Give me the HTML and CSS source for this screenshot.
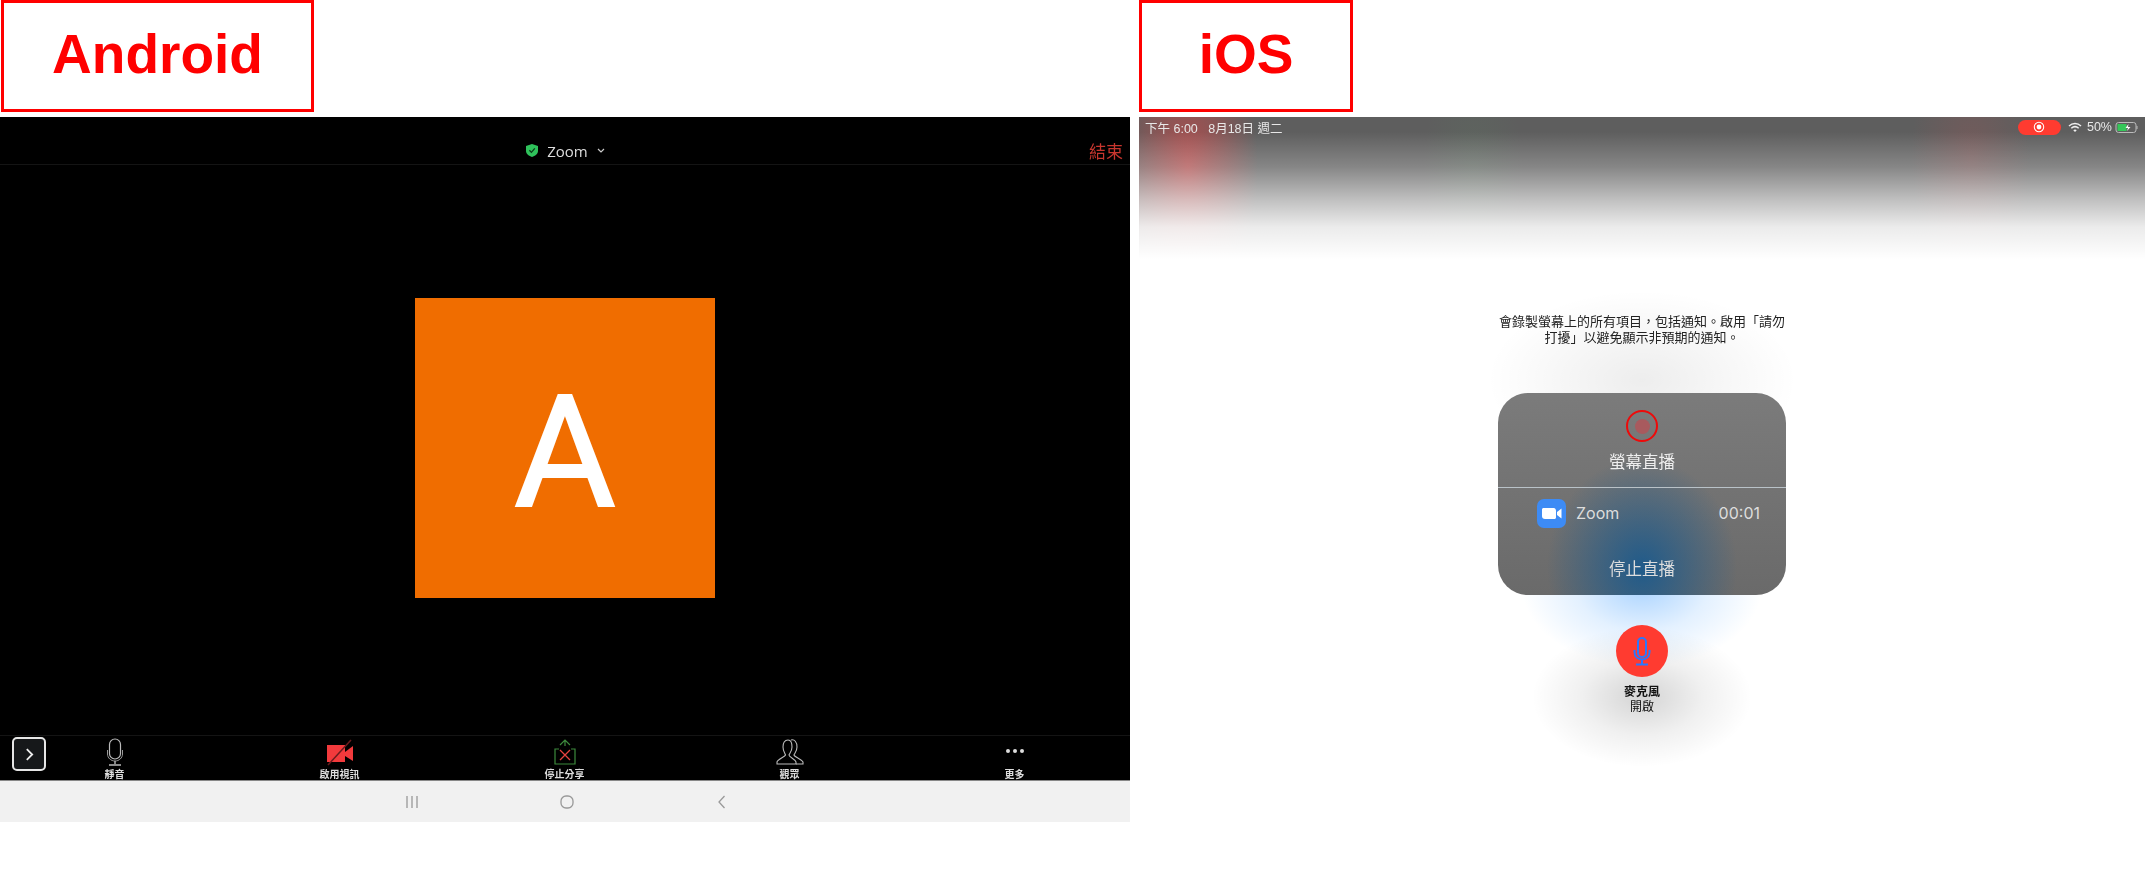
FILE: index.html
```html
<!DOCTYPE html>
<html lang="zh-Hant">
<head>
<meta charset="utf-8">
<title>Android / iOS</title>
<link rel="stylesheet" href="styles.css">
</head>
<body>
<div class="page">
  <section class="col col-android">
    <h2 class="tag tag-android">Android</h2>
    <div class="android">
      <header class="a-head">
        <span></span>
        <div class="a-title">
          <svg class="shield" viewBox="0 0 12 13"><path d="M6 0 12 2V7C12 10 9 12 6 13 3 12 0 10 0 7V2Z" fill="#2fc25b"/><path d="M3.4 6.3 5.4 8.4 8.8 4.4" fill="none" stroke="#0a3a1a" stroke-width="1.3"/></svg>
          <span>Zoom</span>
          <svg class="chev" viewBox="0 0 8 5"><path d="M1 1 4 4 7 1" fill="none" stroke="#ccc" stroke-width="1.2"/></svg>
        </div>
        <span class="a-end">結束</span>
      </header>
      <div class="a-stage"><div class="avatar">A</div></div>
      <nav class="a-tools">
        <div class="a-toggle"><svg viewBox="0 0 10 14" class="tog-ic"><path d="M2 1 8 7 2 13" fill="none" stroke="#eee" stroke-width="2"/></svg></div>
        <div class="tool">
          <svg class="tool-ic" viewBox="0 0 30 29"><rect x="9.5" y="1" width="11" height="20" rx="5.5" fill="none" stroke="#bbb" stroke-width="1.2"/><path d="M7.500 12V16C7.500 20 11 23 15 23S22.500 20 22.500 16V12" fill="none" stroke="#999" stroke-width="1"/><path d="M15 23V26M9 27H21" stroke="#bbb" stroke-width="1.400" fill="none"/></svg>
          <span>靜音</span>
        </div>
        <div class="tool">
          <svg class="tool-ic" viewBox="0 0 30 29"><path d="M2 7H20V24H2Z" fill="#f23a3c"/><path d="M20 14 28 8V23L20 18Z" fill="#f23a3c"/><path d="M3 27 26 2" stroke="#6b1c1e" stroke-width="1.500"/></svg>
          <span>啟用視訊</span>
        </div>
        <div class="tool">
          <svg class="tool-ic" viewBox="0 0 30 29"><path d="M9 11H5V26H25V11H21M10 7 15 2 20 7M15 2V8" fill="none" stroke="#3d8a3d" stroke-width="1.200"/><path d="M10 12 20 22M20 12 10 22" stroke="#e8423f" stroke-width="1.300"/></svg>
          <span>停止分享</span>
        </div>
        <div class="tool">
          <svg class="tool-ic" viewBox="0 0 30 29"><path d="M13 2C9.500 2 8 5 8 9 8 13 10 15 10.500 17 10 19 3 21 2 24V26H21V24C20 21 14 19 14 17 15 15 17 13 17 9 17 5 16 2 13 2Z" fill="none" stroke="#bbb" stroke-width="1.100"/><path d="M16 2C19.500 1 22 4 22 9 22 13 20 15 19 17 19.500 19 26 21 28 24V26H21" fill="none" stroke="#bbb" stroke-width="1.100"/></svg>
          <span>觀眾</span>
        </div>
        <div class="tool">
          <svg class="tool-ic" viewBox="0 0 30 29"><circle cx="8" cy="13" r="2" fill="#ddd"/><circle cx="15" cy="13" r="2" fill="#ddd"/><circle cx="22" cy="13" r="2" fill="#ddd"/></svg>
          <span>更多</span>
        </div>
      </nav>
      <div class="a-nav">
        <svg class="nav-ic" viewBox="0 0 16 16"><path d="M3 2V14M8 2V14M13 2V14" stroke="#999" stroke-width="1.300"/></svg>
        <svg class="nav-ic" viewBox="0 0 16 16"><rect x="2" y="2" width="12" height="12" rx="5" fill="none" stroke="#999" stroke-width="1.300"/></svg>
        <svg class="nav-ic" viewBox="0 0 16 16"><path d="M10.500 2 5 8 10.500 14" fill="none" stroke="#999" stroke-width="1.300"/></svg>
      </div>
    </div>
  </section>

  <section class="col col-ios">
    <h2 class="tag tag-ios">iOS</h2>
    <div class="ios">
      <div class="i-status">
        <span class="i-time">下午 6:00&nbsp;&nbsp;&nbsp;8月18日 週二</span>
        <div class="i-right">
          <span class="i-pill"><svg viewBox="0 0 14 14" class="pill-ic"><circle cx="7" cy="7" r="5.500" fill="none" stroke="#fff" stroke-width="1.200"/><circle cx="7" cy="7" r="2.800" fill="#fff"/></svg></span>
          <svg class="i-wifi" viewBox="0 0 14 11"><path d="M1 4C4.500 .8 9.500 .8 13 4M3.300 6.300C5.500 4.300 8.500 4.300 10.700 6.300" fill="none" stroke="#eee" stroke-width="1.500"/><path d="M5.300 8.200 7 10 8.700 8.200C7.700 7.300 6.300 7.300 5.300 8.200Z" fill="#eee"/></svg>
          <span class="i-pct">50%</span>
          <svg class="i-batt" viewBox="0 0 23 11"><rect x=".5" y=".5" width="20" height="10" rx="2.500" fill="none" stroke="#bbb"/><rect x="2" y="2" width="9" height="7" fill="#35c759"/><path d="M21.500 4V7" stroke="#bbb"/><path d="M13 2 10 6H12.500L11.500 9 15 5H12.500Z" fill="#fff"/></svg>
        </div>
      </div>
      <main class="i-main">
        <p class="i-note">會錄製螢幕上的所有項目，包括通知。啟用「請勿打擾」以避免顯示非預期的通知。</p>
        <div class="i-card">
          <div class="i-card-top">
            <span class="i-rec"><span class="i-dot"></span></span>
            <span class="i-card-title">螢幕直播</span>
          </div>
          <div class="i-row">
            <svg class="z-ic" viewBox="0 0 29 29"><rect width="29" height="29" rx="7" fill="#3d8bf5"/><path d="M5 10.500C5 9.700 5.700 9 6.500 9H16C18 9 19 10 19 12V18.500C19 19.300 18.300 20 17.500 20H8C6 20 5 19 5 17Z" fill="#fff"/><path d="M20 13 24.500 9.500V19.500L20 16Z" fill="#fff"/></svg>
            <span class="z-name">Zoom</span>
            <span class="z-time">00:01</span>
          </div>
          <div class="i-stop">停止直播</div>
        </div>
        <div class="i-mic">
          <svg viewBox="0 0 52 52" class="mic-ic"><circle cx="26" cy="26" r="26" fill="#ff3b30"/><rect x="22" y="13" width="8" height="19" rx="4" fill="#ff3b30" stroke="#2a78ff" stroke-width="2"/><path d="M18.500 25V27C18.500 32 22 34.500 26 34.500S33.500 32 33.500 27V25M26 35V39M20 39.500H32" fill="none" stroke="#2a78ff" stroke-width="2"/></svg>
        </div>
        <div class="i-mic-label"><strong>麥克風</strong><span>開啟</span></div>
      </main>
    </div>
  </section>
</div>
</body>
</html>
```

FILE: styles.css
```css
* { box-sizing: border-box; }
html, body { margin: 0; padding: 0; background: #fff; }
body {
  width: 2145px;
  height: 872px;
  overflow: hidden;
  font-family: "Liberation Sans", "Noto Sans CJK TC", sans-serif;
}
.page { display: flex; align-items: stretch; height: 872px; }
.col { display: flex; flex-direction: column; }
.col-android { width: 1130px; margin-right: 9px; }
.col-ios { flex: 1; }

.tag {
  margin: 0 0 5px;
  height: 112px;
  flex: none;
  border: 3px solid #ff0000;
  color: #ff0000;
  font-size: 55px;
  font-weight: 700;
  display: flex;
  align-items: center;
  justify-content: center;
  padding-bottom: 4px;
}
.tag-android { width: 313px; margin-left: 1px; }
.tag-ios { width: 214px; }

/* Android */
.android { height: 705px; flex: none; display: flex; flex-direction: column; background: #000; }
.a-head {
  height: 48px;
  flex: none;
  border-bottom: 1px solid #141414;
  display: grid;
  grid-template-columns: 1fr auto 1fr;
  align-items: center;
  padding: 20px 7px 0 0;
  filter: blur(.4px);
}
.a-title { display: flex; align-items: center; margin-left: 8px; color: #ddd; font-family: "Open Sans", sans-serif; font-size: 15px; }
.shield { width: 12px; height: 13px; margin-right: 9px; }
.chev { width: 8px; height: 5px; margin-left: 9px; }
.a-end { justify-self: end; color: #c8362e; font-size: 17px; font-family: "Noto Sans CJK TC", sans-serif; line-height: 20px; }
.a-stage { height: 570px; flex: none; display: flex; align-items: center; justify-content: center; padding-bottom: 4px; }
.avatar {
  width: 300px;
  height: 300px;
  background: #f06d00;
  color: #fff;
  font-family: "Roboto", sans-serif;
  font-size: 156px;
  font-weight: 400;
  -webkit-text-stroke: 2px #fff;
  display: flex;
  align-items: center;
  justify-content: center;
  padding-top: 8px;
}
.a-tools {
  position: relative;
  flex: none;
  height: 46px;
  border-top: 1px solid #141414;
  border-bottom: 1px solid #888;
  padding: 2px 0 0 2px;
  display: grid;
  grid-template-columns: repeat(5, 225px);
}
.a-toggle {
  position: absolute;
  left: 12px;
  top: 1px;
  width: 34px;
  height: 34px;
  border: 2px solid #e6e6e6;
  border-radius: 5px;
  background: #16181a;
  display: flex;
  align-items: center;
  justify-content: center;
}
.tog-ic { width: 9px; height: 13px; }
.tool { display: flex; flex-direction: column; align-items: center; color: #ddd; font-size: 10px; font-weight: 700; line-height: 12px; font-family: "Noto Sans CJK TC", sans-serif; filter: blur(.4px); }
.tool-ic { width: 30px; height: 29px; flex: none; }
.tool span { margin-top: 1px; white-space: nowrap; }
.a-nav {
  flex: 1;
  background: #f1f1f1;
  display: grid;
  grid-template-columns: repeat(3, 155px);
  justify-content: center;
  justify-items: center;
  align-items: center;
  padding-left: 4px;
}
.nav-ic { width: 16px; height: 16px; }

/* iOS */
.ios {
  flex: 1;
  display: flex;
  flex-direction: column;
  background:
    linear-gradient(to bottom, rgba(255,255,255,0) 15px, rgba(255,255,255,.25) 50px, rgba(255,255,255,.6) 82px, rgba(255,255,255,.88) 110px, rgba(255,255,255,1) 142px),
    radial-gradient(ellipse 70px 150px at 49px 50px, rgba(215,70,70,.65), rgba(215,70,70,.3) 55%, rgba(215,70,70,0)),
    radial-gradient(ellipse 60px 120px at 832px 40px, rgba(190,80,80,.22), rgba(190,80,80,0)),
    radial-gradient(ellipse 50px 110px at 334px 50px, rgba(90,150,100,.12), rgba(90,150,100,0)),
    #5e5e5e;
}
.i-status {
  height: 20px;
  flex: none;
  display: flex;
  justify-content: space-between;
  align-items: center;
  padding: 0 6px 0 6px;
  color: #e8e8e8;
  font-size: 12.500px;
  filter: blur(.3px);
}
.i-right { display: flex; align-items: center; }
.i-pill {
  width: 43px;
  height: 15px;
  border-radius: 8px;
  background: #ff3b30;
  display: flex;
  align-items: center;
  justify-content: center;
  margin-right: 7px;
}
.pill-ic { width: 12px; height: 12px; }
.i-wifi { width: 14px; height: 11px; margin-right: 5px; }
.i-pct { margin-right: 3px; }
.i-batt { width: 24px; height: 11px; }

.i-main {
  flex: 1;
  display: flex;
  flex-direction: column;
  align-items: center;
  padding-top: 176px;
  background:
    radial-gradient(ellipse 155px 90px at 503px 243px, rgba(0,0,0,.07), rgba(0,0,0,0)),
    radial-gradient(ellipse 120px 80px at 503px 450px, rgba(70,160,255,.45), rgba(70,160,255,.15) 55%, rgba(70,160,255,0)),
    radial-gradient(ellipse 110px 70px at 503px 560px, rgba(0,0,0,.17), rgba(0,0,0,.06) 55%, rgba(0,0,0,0));
}
.i-note {
  margin: 0;
  width: 288px;
  font-size: 13px;
  line-height: 16px;
  text-align: center;
  color: #222;
  font-family: "Noto Sans CJK TC", sans-serif;
  filter: blur(.35px);
}
.i-card {
  margin-top: 48px;
  width: 288px;
  height: 202px;
  flex: none;
  border-radius: 30px;
  color: #eee;
  font-family: "Noto Sans CJK TC", sans-serif;
  background:
    radial-gradient(ellipse 95px 110px at 144px 175px, rgba(28,90,140,.95), rgba(28,90,140,0)),
    linear-gradient(to bottom, #7b7b7b, #6a6a6a);
  display: flex;
  flex-direction: column;
}
.i-card-top {
  height: 95px;
  flex: none;
  display: flex;
  flex-direction: column;
  align-items: center;
  padding-top: 17px;
  border-bottom: 1px solid #b9c2c8;
}
.i-rec {
  width: 32px;
  height: 32px;
  flex: none;
  border: 2px solid #ee0a0a;
  border-radius: 50%;
  display: flex;
  align-items: center;
  justify-content: center;
}
.i-dot { width: 15px; height: 15px; border-radius: 50%; background: #a85a5e; }
.i-card-title { margin-top: 7px; font-size: 16.500px; line-height: 24px; filter: blur(.3px); }
.i-row { display: flex; align-items: center; padding: 0 26px 0 39px; height: 50px; flex: none; }
.z-ic { width: 29px; height: 29px; flex: none; }
.z-name { margin-left: 10px; font-family: "Inter", sans-serif; font-size: 16px; color: #ddd; }
.z-time { margin-left: auto; font-family: "Inter", sans-serif; font-size: 16px; color: #ddd; }
.i-stop { margin-top: 18px; text-align: center; font-size: 16.500px; line-height: 24px; color: #ddd; filter: blur(.3px); }
.i-mic { margin-top: 30px; width: 52px; height: 52px; flex: none; }
.mic-ic { width: 52px; height: 52px; display: block; }
.i-mic-label {
  margin-top: 6px;
  display: flex;
  flex-direction: column;
  align-items: center;
  font-size: 12px;
  line-height: 15px;
  color: #111;
  font-family: "Noto Sans CJK TC", sans-serif;
  filter: blur(.3px);
}
.i-mic-label strong { font-weight: 700; }
```
